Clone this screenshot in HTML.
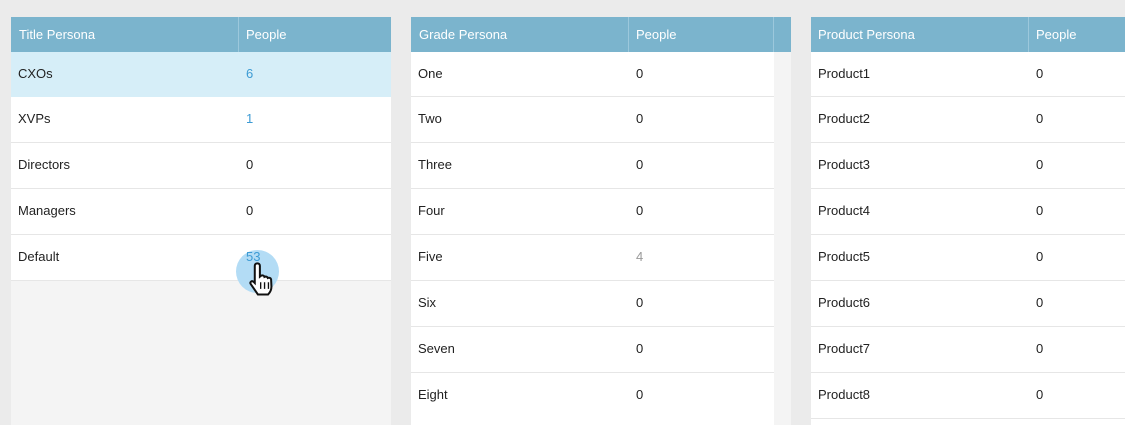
<!DOCTYPE html>
<html><head><style>
html,body{margin:0;width:1125px;height:425px;overflow:hidden}
body{background:#ebebeb;font-family:"Liberation Sans",sans-serif;font-size:13px;color:#222;position:relative}
.p{position:absolute;top:17px;height:408px;background:#f4f4f4;overflow:hidden}
.h{height:35px;background:#7bb4cd;color:#fff;position:relative}
.h span{position:absolute;top:10px}
.d{position:absolute;top:0;width:1px;height:35px;background:#9cc8dc}
.r{height:45px;background:#fff;border-bottom:1px solid #e6e6e6;position:relative}
.r.f{height:44px}
.r span{position:absolute;top:14px}
.a{color:#3d9bd4}
.w{position:absolute;left:0;top:401px;height:7px;background:#fff}
</style></head><body>
<div class="p" style="left:11px;width:380px">
<div class="h"><span style="left:8px">Title Persona</span><div class="d" style="left:227px"></div><span style="left:235px">People</span></div>
<div class="r f" style="background:#d6eef8;border-bottom-color:#d6eef8"><span style="left:7px">CXOs</span><span class="a" style="left:235px">6</span></div>
<div class="r"><span style="left:7px">XVPs</span><span class="a" style="left:235px">1</span></div>
<div class="r"><span style="left:7px">Directors</span><span style="left:235px">0</span></div>
<div class="r"><span style="left:7px">Managers</span><span style="left:235px">0</span></div>
<div class="r" style="overflow:visible"><span style="left:7px">Default</span><div style="position:absolute;left:225px;top:15px;width:43px;height:43px;border-radius:50%;background:#b3dcf5"></div><span class="a" style="left:235px">53</span>
<svg style="position:absolute;left:236px;top:25px;z-index:2" width="34" height="40" viewBox="0 0 30 36"><path d="M9 3c1.5 0 2.3 1 2.3 2.3V15l1.2-1c1.5-.5 2.7.3 2.9 1.2 1.3-.7 2.7 0 3 1 1.3-.6 2.8 0 3 1.3l.3 6.5c0 3-1 5-3 7H9.5L3 21.5c-1-1.5 1-3.2 2.5-2l1.2 1.2V5.3C6.7 4 7.5 3 9 3z" fill="#fff" stroke="#111" stroke-width="1.8"/><path d="M12 20v6M15.5 20v6M19 20v6" stroke="#111" stroke-width="1.2"/></svg>
</div>
</div>
<div class="p" style="left:411px;width:380px">
<div class="h"><span style="left:8px">Grade Persona</span><div class="d" style="left:217px"></div><span style="left:225px">People</span><div class="d" style="left:362px"></div></div>
<div style="width:363px">
<div class="r f"><span style="left:7px">One</span><span style="left:225px">0</span></div>
<div class="r"><span style="left:7px">Two</span><span style="left:225px">0</span></div>
<div class="r"><span style="left:7px">Three</span><span style="left:225px">0</span></div>
<div class="r"><span style="left:7px">Four</span><span style="left:225px">0</span></div>
<div class="r"><span style="left:7px">Five</span><span style="left:225px;color:#999">4</span></div>
<div class="r"><span style="left:7px">Six</span><span style="left:225px">0</span></div>
<div class="r"><span style="left:7px">Seven</span><span style="left:225px">0</span></div>
<div class="r"><span style="left:7px">Eight</span><span style="left:225px">0</span></div>
</div><div class="w" style="width:363px"></div></div>
<div class="p" style="left:811px;width:314px;background:#fff">
<div class="h"><span style="left:7px">Product Persona</span><div class="d" style="left:217px"></div><span style="left:225px">People</span></div>
<div class="r f"><span style="left:7px">Product1</span><span style="left:225px">0</span></div>
<div class="r"><span style="left:7px">Product2</span><span style="left:225px">0</span></div>
<div class="r"><span style="left:7px">Product3</span><span style="left:225px">0</span></div>
<div class="r"><span style="left:7px">Product4</span><span style="left:225px">0</span></div>
<div class="r"><span style="left:7px">Product5</span><span style="left:225px">0</span></div>
<div class="r"><span style="left:7px">Product6</span><span style="left:225px">0</span></div>
<div class="r"><span style="left:7px">Product7</span><span style="left:225px">0</span></div>
<div class="r"><span style="left:7px">Product8</span><span style="left:225px">0</span></div>
</div>
</body></html>
